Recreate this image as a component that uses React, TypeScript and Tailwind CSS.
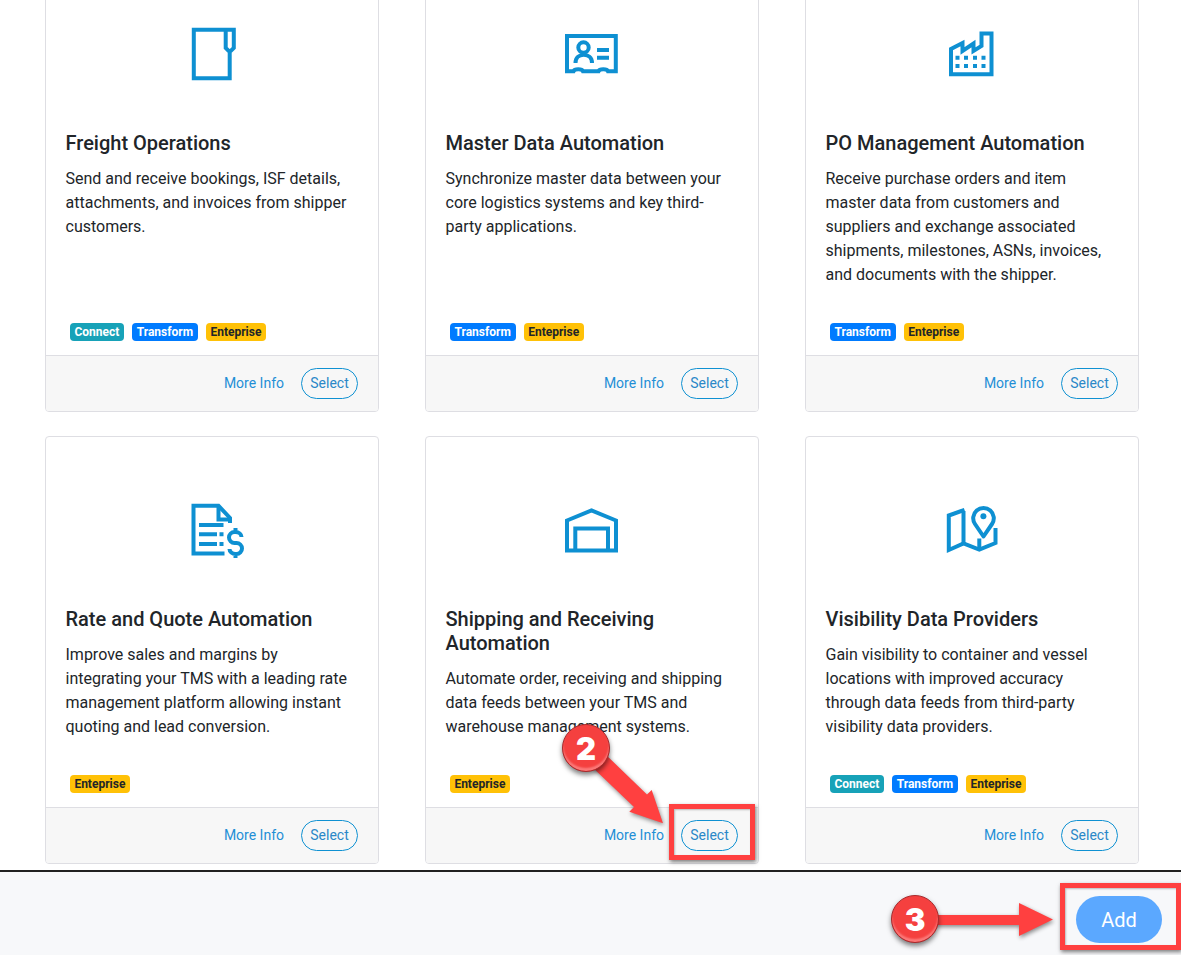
import React from "react";

function Ico({ children }: { children: React.ReactNode }) {
  return (
    <svg width="64" height="64" viewBox="0 0 64 64" fill="none" stroke="#0e90d2" strokeWidth="4" className="block mx-auto">
      {children}
    </svg>
  );
}

const icons: Record<string, React.ReactNode> = {
  freight: (
    <Ico>
      <path d="M49.7 31V57.2H13.8V8.8H53.8V27L49.7 31L45.7 27V8.8" />
    </Ico>
  ),
  master: (
    <Ico>
      <path d="M7 15H55.8V50.2H48C47 47.5 39.5 47.5 38.5 50.2H23C22 47.5 14.5 47.5 13.5 50.2H7Z" />
      <circle cx="23.5" cy="26.5" r="5.2" />
      <path d="M15.5 42C15.5 31 32 31 32 42" />
      <path d="M37 29H49M37 36.7H49" />
    </Ico>
  ),
  po: (
    <Ico>
      <path d="M11 53.3V28L22.5 22V30L33.5 22.5V30L41.5 25V12.5H51.5V53.3Z" />
      <path d="M15.5 36.7h4M24 36.7h4M33 36.7h4M41.5 36.7h4M15.5 45h4M24 45h4M33 45h4M41.5 45h4" strokeWidth="4" />
    </Ico>
  ),
  rate: (
    <Ico>
      <path d="M44.5 56.5H13.5V8.8H38.5L50 21V26" />
      <path d="M38.5 10V22.5H49" />
      <path d="M19 28H43.5M19 37.3H37M39.5 37.3H43.5M19 47H37M39.5 47H43.5" />
      <path d="M61.5 40a6 5 0 0 0-6-5h-1a5.5 5.5 0 0 0 0 11h2a5.5 5.5 0 0 1 0 11h-1a6 5 0 0 1-6-5M55.5 31V35M55.5 57V61" />
    </Ico>
  ),
  ship: (
    <Ico>
      <path d="M7 53.5V23.5L31.5 13.3L56 23.5V53.5H7Z" />
      <path d="M15.3 53V31.5H48V53" strokeWidth="4" />
    </Ico>
  ),
  map: (
    <Ico>
      <path d="M24.5 12.8L8.8 18.5V53L23.5 46.5L39.3 52.5L55.5 46V31" />
      <path d="M23.5 14V46.5M39.3 41.5V52.5" />
      <path d="M43.5 39.5L35 27A10.3 10.3 0 1 1 52 27Z" strokeLinejoin="round" />
      <circle cx="43.4" cy="19.3" r="3" fill="#0e90d2" stroke="none" />
    </Ico>
  ),
};

const badgeCls: Record<string, string> = {
  Connect: "bg-[#17a2b8] text-white",
  Transform: "bg-[#007bff] text-white",
  Enteprise: "bg-[#ffc107] text-[#212529]",
};

const cards = [
  { i: "freight", t: "Freight Operations", d: "Send and receive bookings, ISF details, attachments, and invoices from shipper customers.", b: ["Connect", "Transform", "Enteprise"] },
  { i: "master", t: "Master Data Automation", d: "Synchronize master data between your core logistics systems and key third-party applications.", b: ["Transform", "Enteprise"] },
  { i: "po", t: "PO Management Automation", d: "Receive purchase orders and item master data from customers and suppliers and exchange associated shipments, milestones, ASNs, invoices, and documents with the shipper.", b: ["Transform", "Enteprise"] },
  { i: "rate", t: "Rate and Quote Automation", d: "Improve sales and margins by integrating your TMS with a leading rate management platform allowing instant quoting and lead conversion.", b: ["Enteprise"] },
  { i: "ship", t: "Shipping and Receiving Automation", d: "Automate order, receiving and shipping data feeds between your TMS and warehouse management systems.", b: ["Enteprise"] },
  { i: "map", t: "Visibility Data Providers", d: "Gain visibility to container and vessel locations with improved accuracy through data feeds from third-party visibility data providers.", b: ["Connect", "Transform", "Enteprise"] },
];

function Card({ c }: { c: (typeof cards)[number] }) {
  return (
    <div className="flex flex-col border border-[#dedee3] rounded-[4px] bg-white overflow-hidden">
      <div className="flex-1 flex flex-col px-5 pt-[60px] pb-[14px]">
        <div className="mb-[46px]">{icons[c.i]}</div>
        <h3 className="text-[20px] leading-[24px] font-medium text-[#212529] mb-3 -ml-[0.5px]">{c.t}</h3>
        <p className="text-[16px] leading-[24px] text-[#212529] mb-9 -ml-[0.5px] mr-[1px]">{c.d}</p>
        <div className="mt-auto flex gap-2 ml-1">
          {c.b.map((b) => (
            <span key={b} className={`h-[18px] pl-[4.4px] pr-[5px] rounded-[4px] text-[12px] leading-[18px] font-bold ${badgeCls[b]}`}>
              {b}
            </span>
          ))}
        </div>
      </div>
      <div className="h-[56px] border-t border-[#dedee3] bg-[#f7f7f7] flex items-center justify-end pr-5 gap-[17px]">
        <a className="text-[14px] text-[#1f8fd6]">More Info</a>
        <button className="h-[31px] w-[57px] rounded-full border border-[#0f91d2] text-[14px] text-[#2a87c8] bg-transparent">Select</button>
      </div>
    </div>
  );
}

function Badge({ n, cls }: { n: string; cls: string }) {
  return (
    <div className={`absolute w-[48px] h-[48px] rounded-full bg-[#f5403f] border-[1.5px] border-[#a92a2c] shadow-[0_3px_5px_rgba(0,0,0,0.5),inset_0_-3px_2px_rgba(255,160,160,0.6)] flex items-center justify-center text-white text-[31px] font-black leading-none ${cls}`} style={{ fontFamily: "Inter, sans-serif" }}>
      {n}
    </div>
  );
}

export default function App() {
  return (
    <div className="relative h-[955px] w-[1181px] flex flex-col overflow-hidden bg-white" style={{ fontFamily: "Roboto, sans-serif" }}>
      <div className="flex-1 min-h-0 overflow-hidden">
        <div className="grid grid-cols-[334px_334px_334px] gap-x-[46px] gap-y-6 pl-[45px] -mt-10">
          {cards.map((c) => (
            <Card key={c.i} c={c} />
          ))}
        </div>
      </div>
      <div className="h-[85px] shrink-0 border-t-2 border-[#212121] bg-[#f7f8fa] flex items-start justify-end pr-[19px] pt-6">
        <button className="w-[86px] h-[47px] rounded-full bg-[#5ba8ff] text-white text-[20px]">Add</button>
      </div>

      {/* Annotations */}
      <svg className="absolute left-0 top-0 pointer-events-none drop-shadow-[1px_2px_2px_rgba(0,0,0,0.45)]" width="1181" height="955" fill="#ff4040">
        <path d="M603 752L647 794.5L651.7 790L663 823.3L629.3 811.7L634 807L590 765Z" />
        <path d="M935 915H1019V903L1053 919.5L1019 936V925H935Z" />
      </svg>
      <div className="absolute left-[669px] top-[804px] w-[86px] h-[56px] border-[5px] border-[#ff4040] shadow-[1px_2px_4px_rgba(0,0,0,0.5),inset_1px_1px_2px_rgba(0,0,0,0.25)]" />
      <div className="absolute left-[1060px] top-[883px] w-[121px] h-[67px] border-[5px] border-[#ff4040] shadow-[1px_2px_4px_rgba(0,0,0,0.5),inset_1px_1px_2px_rgba(0,0,0,0.25)]" />
      <Badge n="2" cls="left-[562px] top-[724px]" />
      <Badge n="3" cls="left-[891px] top-[895px]" />
    </div>
  );
}
